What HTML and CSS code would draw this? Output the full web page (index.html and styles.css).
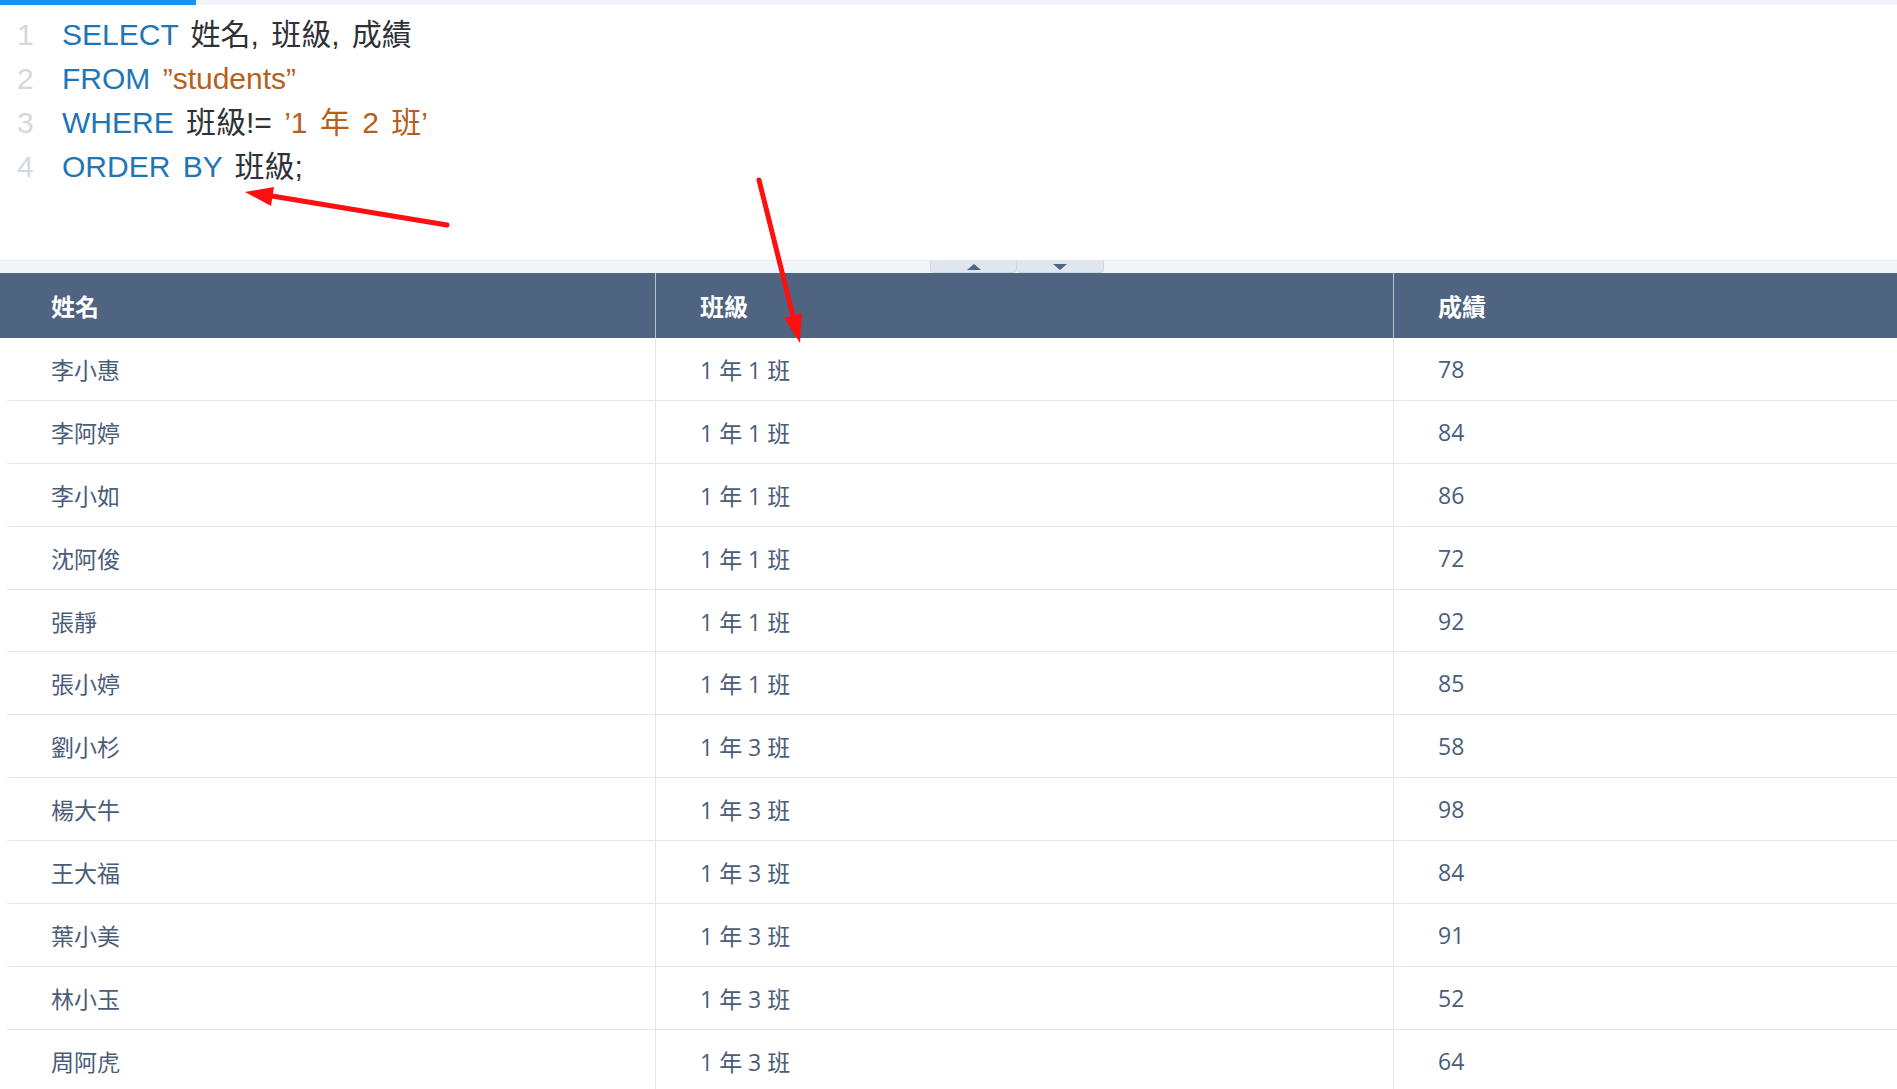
FILE: index.html
```html
<html lang="zh-Hant">
  <head>
    <meta charset="UTF-8" />
    <meta name="viewport" content="width=device-width, initial-scale=1.0" />
    <title>SQL Query</title>
    <link rel="stylesheet" href="styles.css">
  </head>
  <body>
    <div class="progress"><div class="progress-bar"></div></div>

    <!-- query editor -->
    <div class="editor">
      <div class="line"><span class="ln">1</span><span class="kw">SELECT</span> 姓名, 班級, 成績</div>
      <div class="line"><span class="ln">2</span><span class="kw">FROM</span> <span class="str">”students”</span></div>
      <div class="line"><span class="ln">3</span><span class="kw">WHERE</span> 班級!= <span class="str">’1 年 2 班’</span></div>
      <div class="line"><span class="ln">4</span><span class="kw">ORDER BY</span> 班級;</div>
    </div>

    <div class="splitter">
      <div class="split-btns">
        <a href="javascript:;" class="split-btn"><span class="tri-up"></span></a>
        <a href="javascript:;" class="split-btn"><span class="tri-down"></span></a>
      </div>
    </div>

    <!-- result table -->
    <div class="result">
      <div class="thead">
        <div class="th">姓名</div>
        <div class="th">班級</div>
        <div class="th">成績</div>
      </div>
      <div class="tbody">
        <div class="tr"><div class="td">李小惠</div><div class="td">1 年 1 班</div><div class="td">78</div></div>
        <div class="tr"><div class="td">李阿婷</div><div class="td">1 年 1 班</div><div class="td">84</div></div>
        <div class="tr"><div class="td">李小如</div><div class="td">1 年 1 班</div><div class="td">86</div></div>
        <div class="tr"><div class="td">沈阿俊</div><div class="td">1 年 1 班</div><div class="td">72</div></div>
        <div class="tr"><div class="td">張靜</div><div class="td">1 年 1 班</div><div class="td">92</div></div>
        <div class="tr"><div class="td">張小婷</div><div class="td">1 年 1 班</div><div class="td">85</div></div>
        <div class="tr"><div class="td">劉小杉</div><div class="td">1 年 3 班</div><div class="td">58</div></div>
        <div class="tr"><div class="td">楊大牛</div><div class="td">1 年 3 班</div><div class="td">98</div></div>
        <div class="tr"><div class="td">王大福</div><div class="td">1 年 3 班</div><div class="td">84</div></div>
        <div class="tr"><div class="td">葉小美</div><div class="td">1 年 3 班</div><div class="td">91</div></div>
        <div class="tr"><div class="td">林小玉</div><div class="td">1 年 3 班</div><div class="td">52</div></div>
        <div class="tr"><div class="td">周阿虎</div><div class="td">1 年 3 班</div><div class="td">64</div></div>
      </div>
    </div>

    <!-- annotation arrows -->
    <svg class="marks" width="1897" height="1089" viewBox="0 0 1897 1089">
      <line x1="447" y1="225" x2="272" y2="196" stroke="#ff1010" stroke-width="5" stroke-linecap="round" />
      <polygon points="245,192 274,187 271,206" fill="#ff1010" />
      <line x1="759" y1="180" x2="793" y2="316" stroke="#ff1010" stroke-width="5" stroke-linecap="round" />
      <polygon points="800,343 802,313 784,318" fill="#ff1010" />
    </svg>
  </body>
</html>
```

FILE: styles.css
```css
* {
  margin: 0;
  padding: 0;
  box-sizing: border-box;
}
html {
  overflow: hidden;
}
body {
  position: relative;
  width: 1897px;
  height: 1089px;
  background: #fff;
  font-family: "Open Sans", "Noto Sans CJK TC", sans-serif;
}
a {
  text-decoration: none;
}

.progress {
  height: 5px;
  background: #f0f3f8;
}
.progress-bar {
  width: 196px;
  height: 5px;
  background: #1891f5;
}

/* editor */
.editor {
  height: 255px;
  padding-top: 8px;
  font-family: "Liberation Sans", "Noto Sans CJK TC", sans-serif;
  font-size: 30px;
  word-spacing: 4px;
  color: #2e3236;
}
.line {
  height: 44px;
  line-height: 44px;
  white-space: pre;
}
.ln {
  display: inline-block;
  width: 62px;
  padding-left: 17px;
  color: #d5d9df;
}
.kw {
  color: #1f76b6;
}
.str {
  color: #b6601c;
}

/* splitter */
.splitter {
  height: 13px;
  background: #f1f5fa;
  border-top: 1px solid #e2e8f0;
  padding-left: 930px;
}
.split-btns {
  display: flex;
  height: 12px;
}
.split-btn {
  width: 87px;
  height: 12px;
  background: #dfe6f0;
  border: 1px solid #cfd8e4;
  border-top: none;
  border-radius: 0 0 4px 4px;
  display: flex;
  align-items: center;
  justify-content: center;
}
.split-btn + .split-btn {
  border-left: none;
}
.tri-up {
  width: 0;
  height: 0;
  border-left: 7px solid transparent;
  border-right: 7px solid transparent;
  border-bottom: 6px solid #4f6480;
}
.tri-down {
  width: 0;
  height: 0;
  border-left: 7px solid transparent;
  border-right: 7px solid transparent;
  border-top: 6px solid #4f6480;
}

/* table */
.thead {
  display: grid;
  grid-template-columns: 655px 738px 1fr;
  height: 65px;
  background: #4f6480;
  color: #fff;
  font-size: 24px;
  font-weight: 700;
}
.th {
  display: flex;
  align-items: center;
  padding-left: 44px;
}
.th:first-child {
  padding-left: 51px;
}
.th + .th {
  border-left: 1px solid #b9c4d2;
}
.tbody {
  margin-left: 7px;
}
.tr {
  display: grid;
  grid-template-columns: 648px 738px 1fr;
  height: 62.9px;
  border-bottom: 1px solid #e1e7ef;
  color: #4a5d79;
  font-size: 23px;
}
.td {
  display: flex;
  align-items: center;
  padding-left: 44px;
}
.td + .td {
  border-left: 1px solid #e1e7ef;
}

.marks {
  position: absolute;
  left: 0;
  top: 0;
  pointer-events: none;
}
```
